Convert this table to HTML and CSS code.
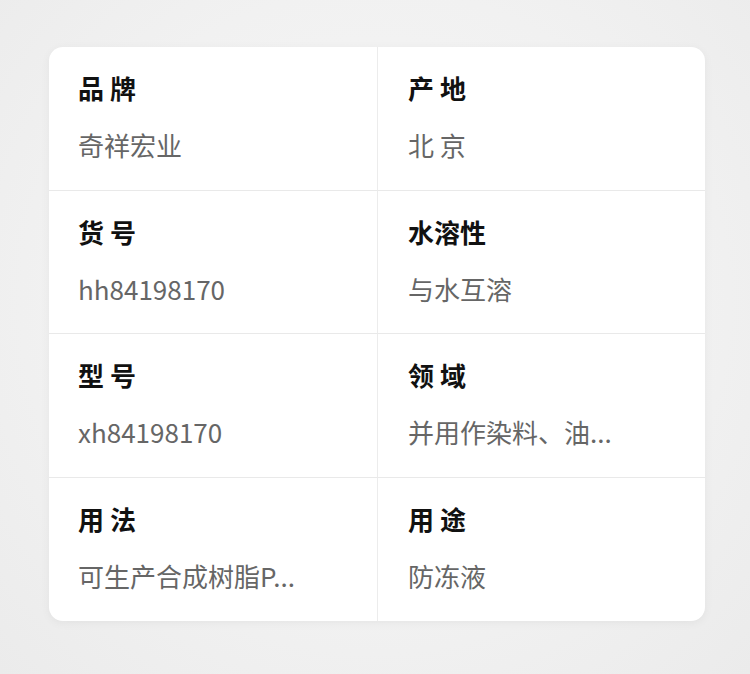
FILE: index.html
```html
<!DOCTYPE html>
<html lang="zh-CN">
<head>
<meta charset="utf-8">
<title>参数</title>
<link rel="stylesheet" href="styles.css">
</head>
<body>
<main class="page">
  <section class="card">
    <div class="cell"><div class="label">品 牌</div><div class="value">奇祥宏业</div></div>
    <div class="cell"><div class="label">产 地</div><div class="value">北 京</div></div>
    <div class="cell"><div class="label">货 号</div><div class="value">hh84198170</div></div>
    <div class="cell"><div class="label">水溶性</div><div class="value">与水互溶</div></div>
    <div class="cell"><div class="label">型 号</div><div class="value">xh84198170</div></div>
    <div class="cell"><div class="label">领 域</div><div class="value">并用作染料、油...</div></div>
    <div class="cell"><div class="label">用 法</div><div class="value">可生产合成树脂P...</div></div>
    <div class="cell"><div class="label">用 途</div><div class="value">防冻液</div></div>
  </section>
</main>
</body>
</html>
```
FILE: styles.css
```css
html, body {
  margin: 0;
  padding: 0;
}
body {
  width: 750px;
  height: 674px;
  overflow: hidden;
  background: radial-gradient(ellipse at 50% 45%, #f7f7f7 0%, #f1f1f1 60%, #ebebeb 100%);
  font-family: "Noto Sans CJK SC", "Noto Sans", sans-serif;
}
.page {
  padding: 47px 46px 0 49px;
}
.card {
  width: 656px;
  height: 574px;
  box-sizing: border-box;
  background: #fff;
  border-radius: 14px;
  box-shadow: 0 2px 10px rgba(0, 0, 0, 0.05);
  display: grid;
  grid-template-columns: 328px 328px;
  grid-template-rows: repeat(4, 1fr);
  overflow: hidden;
}
.cell {
  padding: 23px 20px 0 29px;
  border-bottom: 1px solid #e9e9e9;
  display: flex;
  flex-direction: column;
  gap: 21px;
}
.cell:nth-child(2n) {
  border-left: 1px solid #ececec;
  padding-left: 30px;
}
.cell:nth-child(n+7) {
  border-bottom: none;
}
.label {
  font-size: 26px;
  line-height: 36px;
  font-weight: 700;
  color: #111;
}
.value {
  font-size: 26px;
  line-height: 36px;
  color: #666;
  white-space: nowrap;
}
```
